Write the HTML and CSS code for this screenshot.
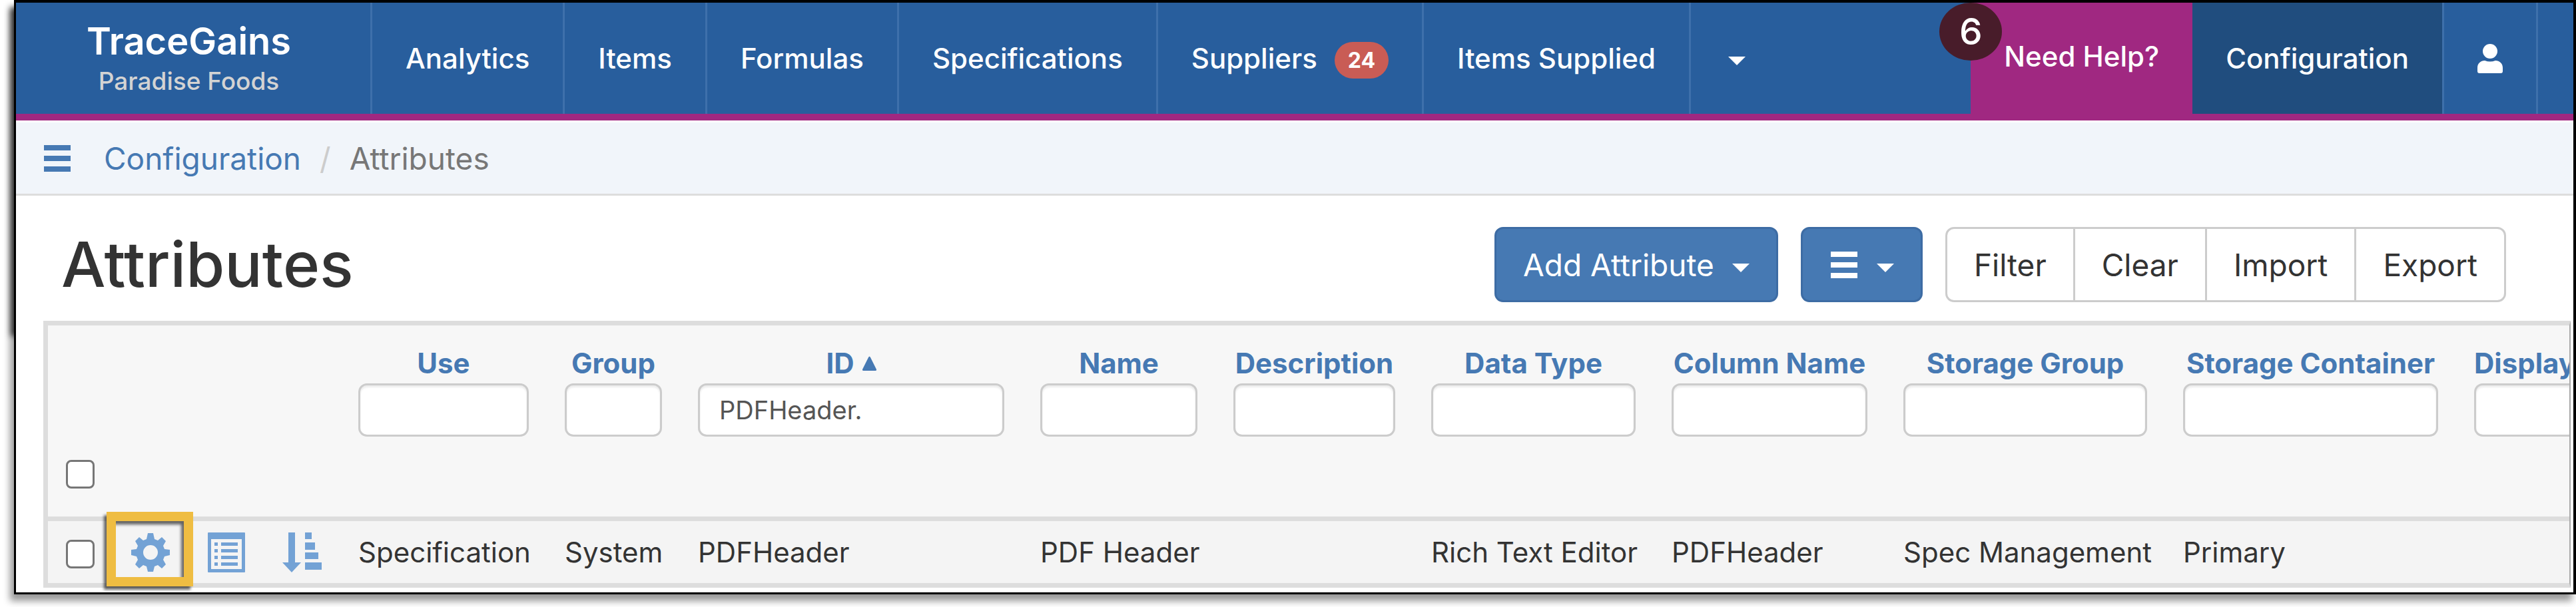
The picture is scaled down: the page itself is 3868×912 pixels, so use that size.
FILE: index.html
```html
<!DOCTYPE html>
<html lang="en">
<head>
    <meta charset="UTF-8">
    <meta name="viewport" content="width=device-width, initial-scale=1.0">
    <title>Attributes</title>
    <link rel="stylesheet" href="styles.css">
</head>
<body>
    <div class="window">
        <header class="navbar">
            <a class="brand" href="#">
                <strong>TraceGains</strong>
                <span>Paradise Foods</span>
            </a>
            <nav class="nav-main">
                <a href="#">Analytics</a>
                <a href="#">Items</a>
                <a href="#">Formulas</a>
                <a href="#">Specifications</a>
                <a href="#">Suppliers <span class="count">24</span></a>
                <a href="#">Items Supplied</a>
                <a href="#" class="more" aria-label="More"><span class="caret"></span></a>
            </nav>
            <nav class="nav-side">
                <a href="#" class="help">Need Help?<span class="help-count">6</span></a>
                <a href="#" class="active">Configuration</a>
                <a href="#" class="user" aria-label="Account">
                    <svg width="38" height="44" viewBox="0 0 38 44"><circle cx="19" cy="11" r="11"/><path d="M0 41V36C0 29 5 25 11 25Q19 28 27 25C33 25 38 29 38 36V41Q38 44 35 44H3Q0 44 0 41Z"/></svg>
                </a>
            </nav>
        </header>

        <div class="crumbs">
            <button class="menu-btn" aria-label="Menu">
                <svg width="40" height="40" viewBox="0 0 40 40"><path d="M0 0h40v8H0zM0 16h40v8H0zM0 32h40v8H0z"/></svg>
            </button>
            <a href="#">Configuration</a>
            <span class="slash">/</span>
            <span>Attributes</span>
        </div>

        <main>
            <div class="page-head">
                <h1>Attributes</h1>
                <div class="actions">
                    <button class="btn btn-primary">Add Attribute <span class="caret"></span></button>
                    <button class="btn btn-primary btn-list" aria-label="List options">
                        <svg width="40" height="40" viewBox="0 0 40 40"><path d="M0 0h40v8H0zM0 16h40v8H0zM0 32h40v8H0z"/></svg>
                        <span class="caret"></span>
                    </button>
                    <div class="btn-group">
                        <button class="btn">Filter</button>
                        <button class="btn">Clear</button>
                        <button class="btn">Import</button>
                        <button class="btn">Export</button>
                    </div>
                </div>
            </div>

            <div class="table-wrap">
                <table>
                    <colgroup>
                        <col class="c-check">
                        <col class="c-icon">
                        <col class="c-icon">
                        <col class="c-icon">
                        <col class="c-use">
                        <col class="c-group">
                        <col class="c-id">
                        <col class="c-name">
                        <col class="c-desc">
                        <col class="c-type">
                        <col class="c-column">
                        <col class="c-sgroup">
                        <col class="c-scont">
                        <col class="c-display">
                    </colgroup>
                    <thead>
                        <tr>
                            <th class="check"><input type="checkbox" aria-label="Select all"></th>
                            <th></th>
                            <th></th>
                            <th></th>
                            <th><label for="f-use">Use</label><input type="text" id="f-use"></th>
                            <th><label for="f-group">Group</label><input type="text" id="f-group"></th>
                            <th><label for="f-id">ID <svg width="21" height="22" viewBox="0 0 21 22"><path d="M9 2q1.500-3 3 0l9 18q.5 2-1.500 2h-18q-2 0-1.500-2z"/></svg></label><input type="text" id="f-id" value="PDFHeader."></th>
                            <th><label for="f-name">Name</label><input type="text" id="f-name"></th>
                            <th><label for="f-desc">Description</label><input type="text" id="f-desc"></th>
                            <th><label for="f-type">Data Type</label><input type="text" id="f-type"></th>
                            <th><label for="f-column">Column Name</label><input type="text" id="f-column"></th>
                            <th><label for="f-sgroup">Storage Group</label><input type="text" id="f-sgroup"></th>
                            <th><label for="f-scont">Storage Container</label><input type="text" id="f-scont"></th>
                            <th class="cut"><label for="f-display">Display</label><input type="text" id="f-display"></th>
                        </tr>
                    </thead>
                    <tbody>
                        <tr>
                            <td class="check"><input type="checkbox" aria-label="Select row"></td>
                            <td class="icon">
                                <a href="#" class="marked" aria-label="Edit">
                                    <svg width="58" height="58" viewBox="0 0 58 58"><path fill-rule="evenodd" d="M25 0h8l2 9 5 2 6-5 6 6-4 7 2 5 8 1v8l-8 2-2 5 4 7-6 6-6-5-5 2-2 8h-8l-2-8-5-2-6 5-6-6 4-7-2-5-8-2v-8l8-1 2-5-4-7 6-6 6 5 5-2zM29 18a11 11 0 1 0 0 22 11 11 0 1 0 0-22z"/></svg>
                                </a>
                            </td>
                            <td class="icon">
                                <a href="#" aria-label="Details">
                                    <svg width="56" height="60" viewBox="0 0 56 60"><path fill-rule="evenodd" d="M1 0h54q1 0 1 1v58q0 1-1 1H1q-1 0-1-1V1q0-1 1-1zM5 10h46v45H5z"/><path d="M10 15h5v5h-5zM20 15h25v5H20zM10 25h5v5h-5zM20 25h25v5H20zM10 35h5v5h-5zM20 35h25v5H20zM10 45h5v5h-5zM20 45h25v5H20z"/></svg>
                                </a>
                            </td>
                            <td class="icon">
                                <a href="#" aria-label="Sort">
                                    <svg width="60" height="60" viewBox="0 0 60 60"><path d="M9 0h10v45h9L14 60 0 45h9zM34 0h10v10H34zM34 15h15v11H34zM34 30h20v10H34zM34 45h25v11H34z"/></svg>
                                </a>
                            </td>
                            <td>Specification</td>
                            <td>System</td>
                            <td>PDFHeader</td>
                            <td>PDF Header</td>
                            <td></td>
                            <td>Rich Text Editor</td>
                            <td>PDFHeader</td>
                            <td>Spec Management</td>
                            <td>Primary</td>
                            <td></td>
                        </tr>
                    </tbody>
                </table>
            </div>
        </main>
    </div>
</body>
</html>
```
FILE: styles.css
```css
*, *::before, *::after {
    box-sizing: border-box;
}

body {
    margin: 0;
    background: #fff;
    color: #333;
    font-family: Inter, "Liberation Sans", sans-serif;
    font-size: 42px;
    overflow: hidden;
}

a {
    color: inherit;
    text-decoration: none;
}

button, input {
    font-family: inherit;
    margin: 0;
}

svg {
    display: block;
    fill: currentColor;
}

.window {
    position: relative;
    margin: 0 0 19px 21px;
    border: 4px solid #000;
    border-width: 4px 4px 3px 3px;
    background: #fff;
    box-shadow: -6px 10px 10px rgba(0, 0, 0, 0.4);
}

/* heavier shade along the upper left side */
.window::before {
    content: "";
    position: absolute;
    z-index: -1;
    left: -3px;
    top: 8px;
    width: 20px;
    height: 493px;
    box-shadow: -5px 0 8px rgba(0, 0, 0, 0.7);
}

.caret {
    display: inline-block;
    border: 13px solid transparent;
    border-top-color: currentColor;
    border-bottom: 0;
}

/* navbar */
.navbar {
    display: flex;
    height: 177px;
    background: #285e9d;
    border-bottom: 10px solid #a02881;
    color: #fff;
}

.brand {
    width: 532px;
    padding: 22px 13px 0 0;
    text-align: center;
}

.brand strong {
    display: block;
    font-size: 56px;
    font-weight: 600;
    line-height: 72px;
}

.brand span {
    display: block;
    font-size: 37px;
    font-weight: 500;
    line-height: 48px;
    color: #d3d3d3;
}

.nav-main, .nav-side {
    display: flex;
}

.nav-main a, .nav-side a {
    display: flex;
    align-items: center;
    padding: 0 50px;
    border-left: 3px solid #3e70ab;
    font-weight: 500;
    white-space: nowrap;
}

.nav-main .more {
    padding: 8px 56px 0;
}

.nav-side {
    margin-left: auto;
}

.count {
    margin: 6px 0 0 26px;
    padding: 0 20px;
    border-radius: 28px;
    background: #c95c55;
    font-size: 32px;
    font-weight: 700;
    line-height: 55px;
}

.nav-side .help {
    position: relative;
    padding-bottom: 6px;
    border-left: 0;
    background: #a02881;
}

.help-count {
    position: absolute;
    left: -47px;
    top: 0;
    width: 94px;
    height: 87px;
    border-radius: 50%;
    background: #481c2a;
    font-size: 55px;
    line-height: 87px;
    text-align: center;
}

.nav-side .active {
    border-left: 0;
    background: #204d7e;
}

.nav-side .user {
    margin-right: 53px;
    border-right: 3px solid #3e70ab;
}

/* breadcrumb */
.crumbs {
    display: flex;
    align-items: center;
    height: 113px;
    padding: 0 42px;
    border-top: 3px solid #fff;
    border-bottom: 3px solid #ddd;
    background: #f1f5fa;
    color: #777;
    font-size: 46px;
}

.crumbs a, .menu-btn {
    color: #4679b3;
}

.menu-btn {
    margin-right: 50px;
    padding: 0;
    border: 0;
    background: none;
}

.slash {
    margin: 0 28px;
    color: #ccc;
}

/* page head */
.page-head {
    display: flex;
    justify-content: space-between;
    align-items: center;
    padding: 47px 101px 28px 68px;
}

h1 {
    margin: 0;
    font-size: 94px;
    font-weight: 500;
    line-height: 113px;
}

.actions, .btn-group {
    display: flex;
}

.actions {
    gap: 34px;
}

.btn {
    display: flex;
    align-items: center;
    height: 113px;
    padding: 0 40px;
    border: 3px solid #ccc;
    border-radius: 13px;
    background: #fff;
    color: #333;
    font-size: 46px;
}

.btn .caret {
    margin: 10px 0 0 27px;
}

.btn-primary {
    border-color: #3d6ca4;
    background: #4679b3;
    color: #fff;
}

.btn-list svg {
    margin: 0 2px;
}

.btn-group .btn {
    margin-left: -3px;
    border-radius: 0;
}

.btn-group .btn:first-child {
    margin-left: 0;
    border-radius: 13px 0 0 13px;
}

.btn-group .btn:last-child {
    border-radius: 0 13px 13px 0;
}

/* table */
.table-wrap {
    margin: 0 4px 7px 41px;
    overflow-x: clip;
    border: 7px solid #ddd;
    border-right: 2px solid #aaa;
}

table {
    table-layout: fixed;
    width: 100%;
    border-collapse: separate;
    border-spacing: 0;
}

.c-check { width: 97px; }
.c-icon { width: 114px; }
.c-use { width: 310px; }
.c-group { width: 200px; }
.c-id { width: 514px; }
.c-name { width: 290px; }
.c-desc { width: 297px; }
.c-type { width: 361px; }
.c-column { width: 348px; }
.c-sgroup { width: 420px; }
.c-scont { width: 437px; }

th, td {
    padding: 0 27px;
    white-space: nowrap;
}

th {
    height: 287px;
    padding-top: 27px;
    background: #f7f7f7;
    color: #4679b3;
    text-align: center;
    vertical-align: top;
}

th label {
    display: flex;
    justify-content: center;
    align-items: center;
    gap: 12px;
    line-height: 60px;
}

th input[type="text"] {
    display: block;
    width: 100%;
    height: 80px;
    padding: 0 29px;
    border: 3px solid #ccc;
    border-radius: 13px;
    background: #fff;
    box-shadow: inset 0 3px 3px rgba(0, 0, 0, 0.08);
    color: #555;
    font-size: 38px;
}

th.check {
    padding-bottom: 42px;
    vertical-align: bottom;
}

th.cut {
    padding-right: 0;
}

th.cut label {
    justify-content: flex-start;
}

th.cut input[type="text"] {
    border-right: 0;
    border-radius: 13px 0 0 13px;
}

input[type="checkbox"] {
    appearance: none;
    display: block;
    width: 43px;
    height: 43px;
    border: 3px solid #767676;
    border-radius: 8px;
    background: #fff;
}

td {
    height: 100px;
    border-top: 7px solid #ddd;
    background: #f4f4f4;
}

td.check {
    padding-top: 6px;
}

td.icon {
    color: #73a2d5;
}

td.icon a {
    display: flex;
    justify-content: center;
}

.marked {
    position: relative;
}

.marked::after {
    content: "";
    position: absolute;
    left: -36px;
    top: -32px;
    width: 130px;
    height: 112px;
    border: 14px solid #efbd42;
    box-shadow: -4px 5px 4px rgba(0, 0, 0, 0.6), inset -4px 5px 4px rgba(0, 0, 0, 0.6);
}
```
